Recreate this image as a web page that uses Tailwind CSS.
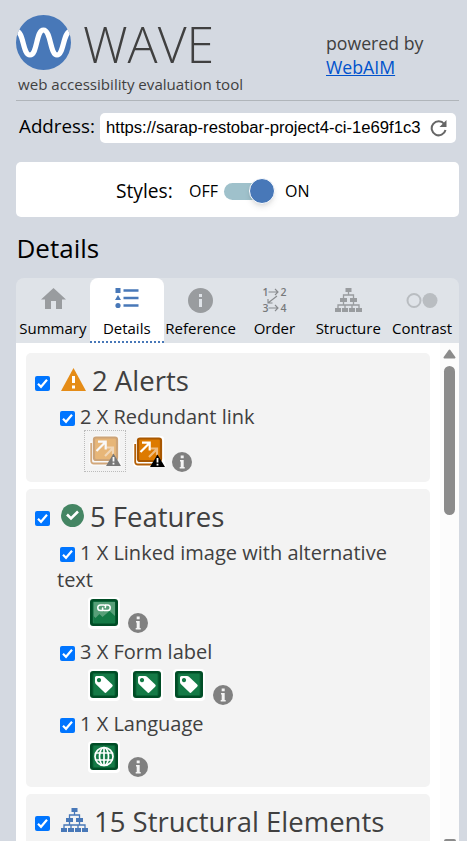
<!DOCTYPE html>
<html lang="en">
<head>
<meta charset="utf-8">
<title>WAVE</title>
<script src="https://cdn.jsdelivr.net/npm/@tailwindcss/browser@4"></script>
</head>
<body class="h-[841px] overflow-hidden bg-[#d4d9e1] font-['Open_Sans','Noto_Sans',sans-serif] text-black">
<svg class="hidden">
  <symbol id="check" viewBox="0 0 15 15"><rect width="15" height="15" rx="2" fill="#0075ff"/><path d="M3 7.8 6 10.8 12 3.8" fill="none" stroke="#fff" stroke-width="2.2"/></symbol>
  <symbol id="info" viewBox="0 0 20 20"><circle cx="10" cy="10" r="10" fill="currentColor"/><path d="M8.700 3.600h3v2.600h-3zM8 8h3.700v7h1v1.600H7.700V15h1V9.500H8z" fill="#f3f3f3"/></symbol>
  <symbol id="tree" viewBox="0 0 27 24"><path d="M10.500 0h6v4h-6zM5 10h7v4H5zM15 10h7v4h-7zM0 20h6v4H0zM7 20h6v4H7zM14 20h6v4h-6zM21 20h6v4h-6z" fill="currentColor"/><path d="M13.500 4v3M8.500 10V7h10v3M8.500 14v3M3 20v-3h21v3M10 20v-3M17 20v-3M18.500 14v3" fill="none" stroke="currentColor" stroke-width="1.300"/></symbol>
  <symbol id="redundant" viewBox="0 0 34 34">
    <path d="M7 1h22a3 3 0 0 1 3 3v18l2 9v1H5a4 4 0 0 1-4-4V10a3 3 0 0 1 3-3z" fill="#fff"/>
    <path d="M3.200 9v18a2.500 2.500 0 0 0 2.500 2.500H24" fill="none" stroke="#b45f06" stroke-width="1.800"/>
    <rect x="6" y="3.500" width="23" height="22.500" rx="2" fill="#dd7a00" stroke="#a85700" stroke-width="2.200"/>
    <path d="M17 22 24.500 14.500M18.500 13.500h6.500v6.500" fill="none" stroke="#efbc80" stroke-width="2.200"/>
    <path d="M8.500 17 17 8.500M10 7.700h7.700v7.700" fill="none" stroke="#fff" stroke-width="2.200"/>
    <path d="M25.500 19.500 33 32H18z" fill="#000"/><path d="M25.500 23v4.500M25.500 28.800v1.700" stroke="#fff" stroke-width="1.800"/>
  </symbol>
  <symbol id="green" viewBox="0 0 32 32"><rect width="32" height="32" rx="4" fill="#fff"/><rect x="2" y="2" width="28" height="27" rx="3" fill="#004d26"/><rect x="5" y="4.500" width="22" height="22" rx="1" fill="#147a46" stroke="#0b6437"/></symbol>
  <symbol id="label" viewBox="0 0 32 32"><use href="#green"/><path fill-rule="evenodd" d="M8.500 7H14q1.200 0 2 .8l8.200 7.700a1.500 1.500 0 0 1 0 2.200l-5.700 5.600a1.500 1.500 0 0 1-2.200 0L8 15.300Q7 14.500 7 13V8.500Q7 7 8.500 7zM11 9a2.100 2.100 0 1 0 .01 0z" fill="#fff"/></symbol>
</svg>
<main class="flex h-full flex-col overflow-hidden pr-2 pl-4">
  <header class="flex h-[101px] shrink-0 justify-between border-b border-[#b0b5ba] pt-[15px] text-[#404040]">
    <div>
      <div class="flex h-[55px] gap-3">
        <svg class="size-[55px]" viewBox="0 0 55 55"><defs><clipPath id="disc"><circle cx="27.500" cy="27.500" r="27.500"/></clipPath></defs><circle cx="27.500" cy="27.500" r="27.500" fill="#4878b8"/><path d="M0 16C8 16 6.500 40 14 40S20 15 27.500 15 34 40 41 40 47 16 55 16" fill="none" stroke="#fff" stroke-width="5.200" clip-path="url(#disc)"/></svg>
        <div class="h-[55px] text-[50px] leading-[58px] font-light">WAVE</div>
      </div>
      <div class="pl-[2px] text-[15.100px] leading-[29px]">web accessibility evaluation tool</div>
    </div>
    <div class="w-[133px] pt-4 text-[17.700px] leading-6">powered by<br><a class="text-[#0052cc] underline">WebAIM</a></div>
  </header>
  <div class="mt-3 flex h-[30px] shrink-0 items-center pr-[3px] pl-[3px]">
    <label class="-mt-1 w-[81px] text-[18.800px] leading-6">Address:</label>
    <div class="flex h-[30px] flex-1 items-center justify-between rounded-[5px] bg-white px-[6px] font-['Liberation_Sans'] text-[16.650px] whitespace-nowrap"><span>https://sarap-restobar-project4-ci-1e69f1c3</span>
      <svg class="mr-[2px] size-[18px] shrink-0" viewBox="0 0 18 18"><path d="M14.200 5A7 7 0 1 0 15.500 11" fill="none" stroke="#666" stroke-width="2"/><path d="M16.500 1v7h-7z" fill="#666"/></svg>
    </div>
  </div>
  <section class="mt-[19px] flex h-[55px] shrink-0 items-center rounded-[5px] bg-white pt-[3px] pl-[100px] text-[16px]">
    <span class="w-[73px] text-[19.200px]">Styles:</span><span class="w-[35px]">OFF</span>
    <span class="flex h-[17px] w-[50px] items-center justify-end rounded-full bg-[#9fc1cb]"><span class="-mr-px size-[26px] rounded-full border border-white bg-[#4878b8] shadow-md"></span></span>
    <span class="pl-[11px]">ON</span>
  </section>
  <h1 class="mt-[13px] h-[48px] shrink-0 pl-[0.500px] text-[26px] leading-9">Details</h1>
  <nav class="grid h-[65px] shrink-0 grid-cols-6 rounded-t-[8px] bg-[#dfe3e8] text-center text-[15px] leading-[18px] whitespace-nowrap text-black">
    <div class="flex flex-col items-center pt-[9px]"><svg class="ml-px h-[32px] w-[25px] text-[#999c9f]" viewBox="0 0 25 32"><path d="M12.500 1 25 12.500h-4V22h-6v-8h-5v8H4v-9.500H0z" fill="currentColor"/></svg><span>Summary</span></div>
    <div class="flex flex-col items-center rounded-t-[8px] border-b-2 border-dotted border-[#4878b8] bg-white pt-[9px]"><svg class="h-[32px] w-[24px]" viewBox="0 0 24 32"><path d="M.5 1h5v5h-5zM3 8l3 5H0zM8.500 2.200h15v2.500h-15zM8.500 9.700h15v2.500h-15zM8.500 17.200h15v2.500h-15z" fill="#4878b8"/><circle cx="3" cy="18.500" r="2.600" fill="#4878b8"/></svg><span>Details</span></div>
    <div class="flex flex-col items-center pt-[9px]"><svg class="h-[32px] w-[25px]" viewBox="0 0 25 32"><circle cx="12.500" cy="13.500" r="12.500" fill="#999c9f"/><path d="M11 7h3v3h-3zM11 12h3v8h-3z" fill="#dfe3e8"/></svg><span>Reference</span></div>
    <div class="flex flex-col items-center pt-[9px]"><div class="relative h-[32px] w-[24px] text-[10.500px] leading-[11px] font-semibold text-[#77797b]"><svg class="absolute inset-0 h-8 w-6" viewBox="0 0 24 32"><path d="M6.500 5H16M13 2l3 3-3 3M6.500 21H16M13 18l3 3-3 3M15 9l-9 7M6 12v4h4.500" fill="none" stroke="#888b8e" stroke-width="1.100"/></svg><div class="flex h-4 justify-between"><span>1</span><span>2</span></div><div class="flex justify-between"><span>3</span><span>4</span></div></div><span>Order</span></div>
    <div class="flex flex-col items-center pt-[9px]"><div class="h-[32px] pt-[1px]"><svg class="h-[24px] w-[27px] text-[#999c9f]"><use href="#tree"/></svg></div><span>Structure</span></div>
    <div class="flex flex-col items-center pt-[9px]"><svg class="h-[32px] w-[32px]" viewBox="0 0 32 32"><circle cx="8" cy="13.500" r="6.500" fill="none" stroke="#b9bdc1" stroke-width="2"/><circle cx="24" cy="13.500" r="7.500" fill="#b9bdc1"/></svg><span>Contrast</span></div>
  </nav>
  <div class="flex min-h-0 flex-1 justify-between overflow-hidden bg-white pl-[10px] text-[20px] leading-[27px] text-[#404040]">
    <div class="w-[404px] pt-[10px]">
      <section class="h-[129px] rounded-[5px] bg-[#f3f3f3] pt-[8px] pl-[9px]">
        <h2 class="flex h-[42px] items-start text-[27.500px] leading-[39px]"><svg class="mt-[15px] mr-[11px] size-[15px]"><use href="#check"/></svg><svg class="mt-[7px] h-[23px] w-[25px]" viewBox="0 0 25 23"><path d="M12.500 0 25 23H0z" fill="#e58c17"/><path d="M12.500 8v7M12.500 17.500v3" stroke="#fff" stroke-width="3"/></svg><span class="pl-[6px]">2 Alerts</span></h2>
        <h3 class="flex h-[27px] pl-[25px]"><svg class="mt-[8px] mr-[5px] size-[15px]"><use href="#check"/></svg>2 X Redundant link</h3>
        <div class="flex h-[42px] pl-[49px]"><div class="flex h-[42px] w-[42px] items-center justify-center border border-dotted border-[#bbb]"><svg class="size-[34px] opacity-50"><use href="#redundant"/></svg></div><svg class="mt-[5px] ml-[6px] size-[34px]"><use href="#redundant"/></svg><svg class="mt-[22px] ml-[6px] size-5 text-[#808080]"><use href="#info"/></svg></div>
      </section>
      <section class="mt-[7px] h-[298px] rounded-[5px] bg-[#f3f3f3] pt-[8px] pl-[9px]">
        <h2 class="flex h-[42px] items-start text-[27.500px] leading-[39px]"><svg class="mt-[14px] mr-[11px] size-[15px]"><use href="#check"/></svg><svg class="mt-[7px] size-[23px]" viewBox="0 0 23 23"><circle cx="11.500" cy="11.500" r="11.500" fill="#448563"/><path d="m6 10.500 4 4 7-7" fill="none" stroke="#fff" stroke-width="2.600"/></svg><span class="pl-[6px]">5 Features</span></h2>
        <h3 class="h-[54px] pr-5 pl-[22px]"><svg class="mr-[5px] ml-[3px] inline-block size-[15px] align-[-2px]"><use href="#check"/></svg>1 X Linked image with alternative text</h3>
        <div class="flex h-[45px] pl-[53px]"><svg class="mt-[4px] size-8" viewBox="0 0 32 32"><use href="#green"/><path d="M5.500 5h21.500v21H5.500z" fill="#579f78"/><path d="m5.500 19 2 2 4-4 3 3 7-6 5.500 5v7H5.500z" fill="#147a46"/><path d="M15 13.500h-2.500a2.700 2.700 0 0 1 0-5.500H16q2.500.5 1 3M17 8h2.500a2.700 2.700 0 0 1 0 5.500H16q-2.500-.5-1-3" fill="none" stroke="#fff" stroke-width="1.500"/></svg><svg class="mt-[20px] ml-[8px] size-5 text-[#808080]"><use href="#info"/></svg></div>
        <h3 class="flex h-[27px] pl-[25px]"><svg class="mt-[8px] mr-[5px] size-[15px]"><use href="#check"/></svg>3 X Form label</h3>
        <div class="flex h-[45px] pl-[53px]"><div class="mt-[4px] flex gap-[10.500px]"><svg class="size-8"><use href="#label"/></svg><svg class="size-8"><use href="#label"/></svg><svg class="size-8"><use href="#label"/></svg></div><svg class="mt-[20px] ml-[8px] size-5 text-[#808080]"><use href="#info"/></svg></div>
        <h3 class="flex h-[27px] pl-[25px]"><svg class="mt-[8px] mr-[5px] size-[15px]"><use href="#check"/></svg>1 X Language</h3>
        <div class="flex h-[45px] pl-[53px]"><svg class="mt-[4px] size-8" viewBox="0 0 32 32"><use href="#green"/><g fill="none" stroke="#fff" stroke-width="1.700"><circle cx="16" cy="15.500" r="9"/><ellipse cx="16" cy="15.500" rx="4.500" ry="9"/><path d="M16 6.500v18M7.800 12h16.400M7.800 19h16.400"/></g></svg><svg class="mt-[20px] ml-[8px] size-5 text-[#808080]"><use href="#info"/></svg></div>
      </section>
      <section class="mt-[7px] h-[129px] rounded-[5px] bg-[#f3f3f3] pt-[8px] pl-[9px]">
        <h2 class="flex h-[42px] items-start text-[27.500px] leading-[39px]"><svg class="mt-[14px] mr-[11px] size-[15px]"><use href="#check"/></svg><svg class="mt-[6px] h-[24px] w-[27px] text-[#4878b8]"><use href="#tree"/></svg><span class="pl-[6px]">15 Structural Elements</span></h2>
      </section>
    </div>
    <div class="flex w-[19px] flex-col items-center bg-[#fcfcfc] pt-[6px]"><svg class="h-[10px] w-[13px] shrink-0" viewBox="0 0 13 10"><path d="M6.500 1.500 11.500 8.500h-10z" fill="#8b8b8b" stroke="#8b8b8b" stroke-width="2" stroke-linejoin="round"/></svg><div class="mt-[7px] h-[149px] w-[11px] shrink-0 rounded-full bg-[#8b8b8b]"></div><div class="mt-auto h-[2px] w-[12px] rounded-t bg-[#8b8b8b]"></div></div>
  </div>
</main>
</body>
</html>
